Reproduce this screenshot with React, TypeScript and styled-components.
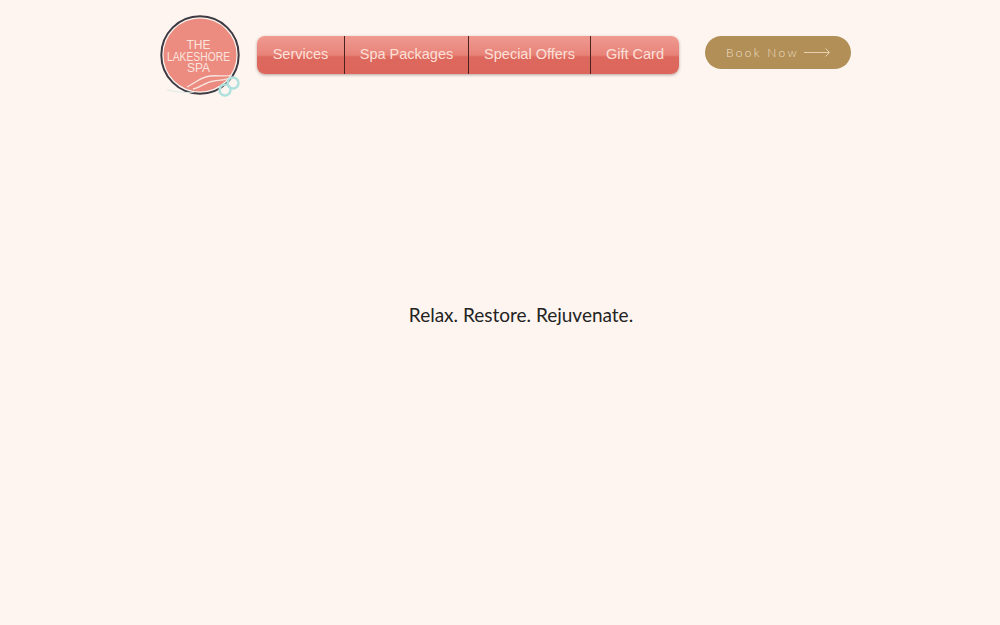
import React from "react";
import styled, { createGlobalStyle } from "styled-components";

const GlobalStyle = createGlobalStyle`
  html, body {
    margin: 0;
    padding: 0;
    background: #fef5f0;
  }
`;

const Page = styled.div`
  width: 1000px;
  height: 625px;
  overflow: hidden;
  background: #fef5f0;
`;

const Header = styled.header`
  display: flex;
  align-items: flex-start;
  height: 100px;
  padding: 15px 0 0 160px;
  box-sizing: border-box;
`;

const LogoImage = styled.svg`
  display: block;
  width: 82px;
  height: 84px;
  flex-shrink: 0;
`;

const Nav = styled.nav`
  display: flex;
  height: 38px;
  margin: 21px 0 0 15px;
  border-radius: 8px;
  overflow: hidden;
  box-shadow: 0 1px 3px rgba(90, 60, 55, 0.45);
  background: linear-gradient(
    to bottom,
    #f09a90 0%,
    #e78379 50%,
    #dd685d 55%,
    #dc665b 100%
  );
`;

const NavItem = styled.a<{ $width: number; $last?: boolean }>`
  display: flex;
  align-items: center;
  justify-content: center;
  width: ${(p) => p.$width}px;
  box-sizing: border-box;
  padding-bottom: 2px;
  border-right: ${(p) => (p.$last ? "none" : "1px solid #4b2220")};
  color: #fde0d8;
  font-family: "Liberation Sans", Arial, sans-serif;
  font-size: 14.5px;
  white-space: nowrap;
`;

const BookButton = styled.a`
  display: flex;
  align-items: center;
  width: 146px;
  height: 33px;
  margin: 21px 0 0 26px;
  padding-left: 21px;
  box-sizing: border-box;
  border-radius: 17px;
  background: #b18f57;
  color: #f0dfc6;
  font-family: "Lato", sans-serif;
  font-size: 12px;
  font-weight: 300;
  letter-spacing: 2.3px;
  white-space: nowrap;
`;

const ArrowIcon = styled.svg`
  display: block;
  width: 27px;
  height: 9px;
  margin-left: 5px;
  flex-shrink: 0;
`;

const Hero = styled.main`
  display: flex;
  justify-content: center;
  padding: 203px 0 0 42px;
`;

const Tagline = styled.h1`
  margin: 0;
  color: #232323;
  font-family: "Lato", sans-serif;
  font-size: 19px;
  font-weight: 400;
  line-height: 24px;
`;

const navItems = [
  { label: "Services", width: 88 },
  { label: "Spa Packages", width: 124 },
  { label: "Special Offers", width: 122 },
  { label: "Gift Card", width: 88 },
];

const Logo = () => (
  <LogoImage viewBox="0 0 82 84">
    <circle cx="40" cy="40" r="38.7" fill="#fbf3ef" stroke="#3f3a42" strokeWidth="2" />
    <circle cx="40" cy="40" r="36.5" fill="#ec8b80" />
    <g fontFamily="Liberation Sans, Arial, sans-serif" fontSize="12" fill="#fbe4dd" textAnchor="middle">
      <text x="38.5" y="34">THE</text>
      <text x="38.5" y="46" textLength="63" lengthAdjust="spacingAndGlyphs">LAKESHORE</text>
      <text x="38.5" y="57">SPA</text>
    </g>
    <path d="M27 72 C34 69 40 62 50 61 C58 60 66 62 72 60" fill="none" stroke="#f7e6e0" strokeWidth="1.3" />
    <path d="M33 74 C40 73 45 67 54 66 C61 65 67 65 72 62" fill="none" stroke="#f7e6e0" strokeWidth="1.3" />
    <path d="M7 75 C15 77 25 78 34 77" fill="none" stroke="#dcebe6" strokeWidth="1.1" />
    <circle cx="73" cy="68" r="5.5" fill="none" stroke="#aee1dd" strokeWidth="2.4" />
    <circle cx="65" cy="75" r="5.5" fill="none" stroke="#aee1dd" strokeWidth="2.4" />
  </LogoImage>
);

const Arrow = () => (
  <ArrowIcon viewBox="0 0 27 9">
    <path d="M0 4.5 H25 M21.5 .5 L25.5 4.5 L21.5 8.5" fill="none" stroke="#e6d2b0" strokeWidth="1" />
  </ArrowIcon>
);

export default function App() {
  return (
    <>
      <GlobalStyle />
      <Page>
        <Header>
          <Logo />
          <Nav>
            {navItems.map((item, i) => (
              <NavItem key={item.label} $width={item.width} $last={i === navItems.length - 1}>
                {item.label}
              </NavItem>
            ))}
          </Nav>
          <BookButton>
            Book Now
            <Arrow />
          </BookButton>
        </Header>
        <Hero>
          <Tagline>Relax. Restore. Rejuvenate.</Tagline>
        </Hero>
      </Page>
    </>
  );
}
